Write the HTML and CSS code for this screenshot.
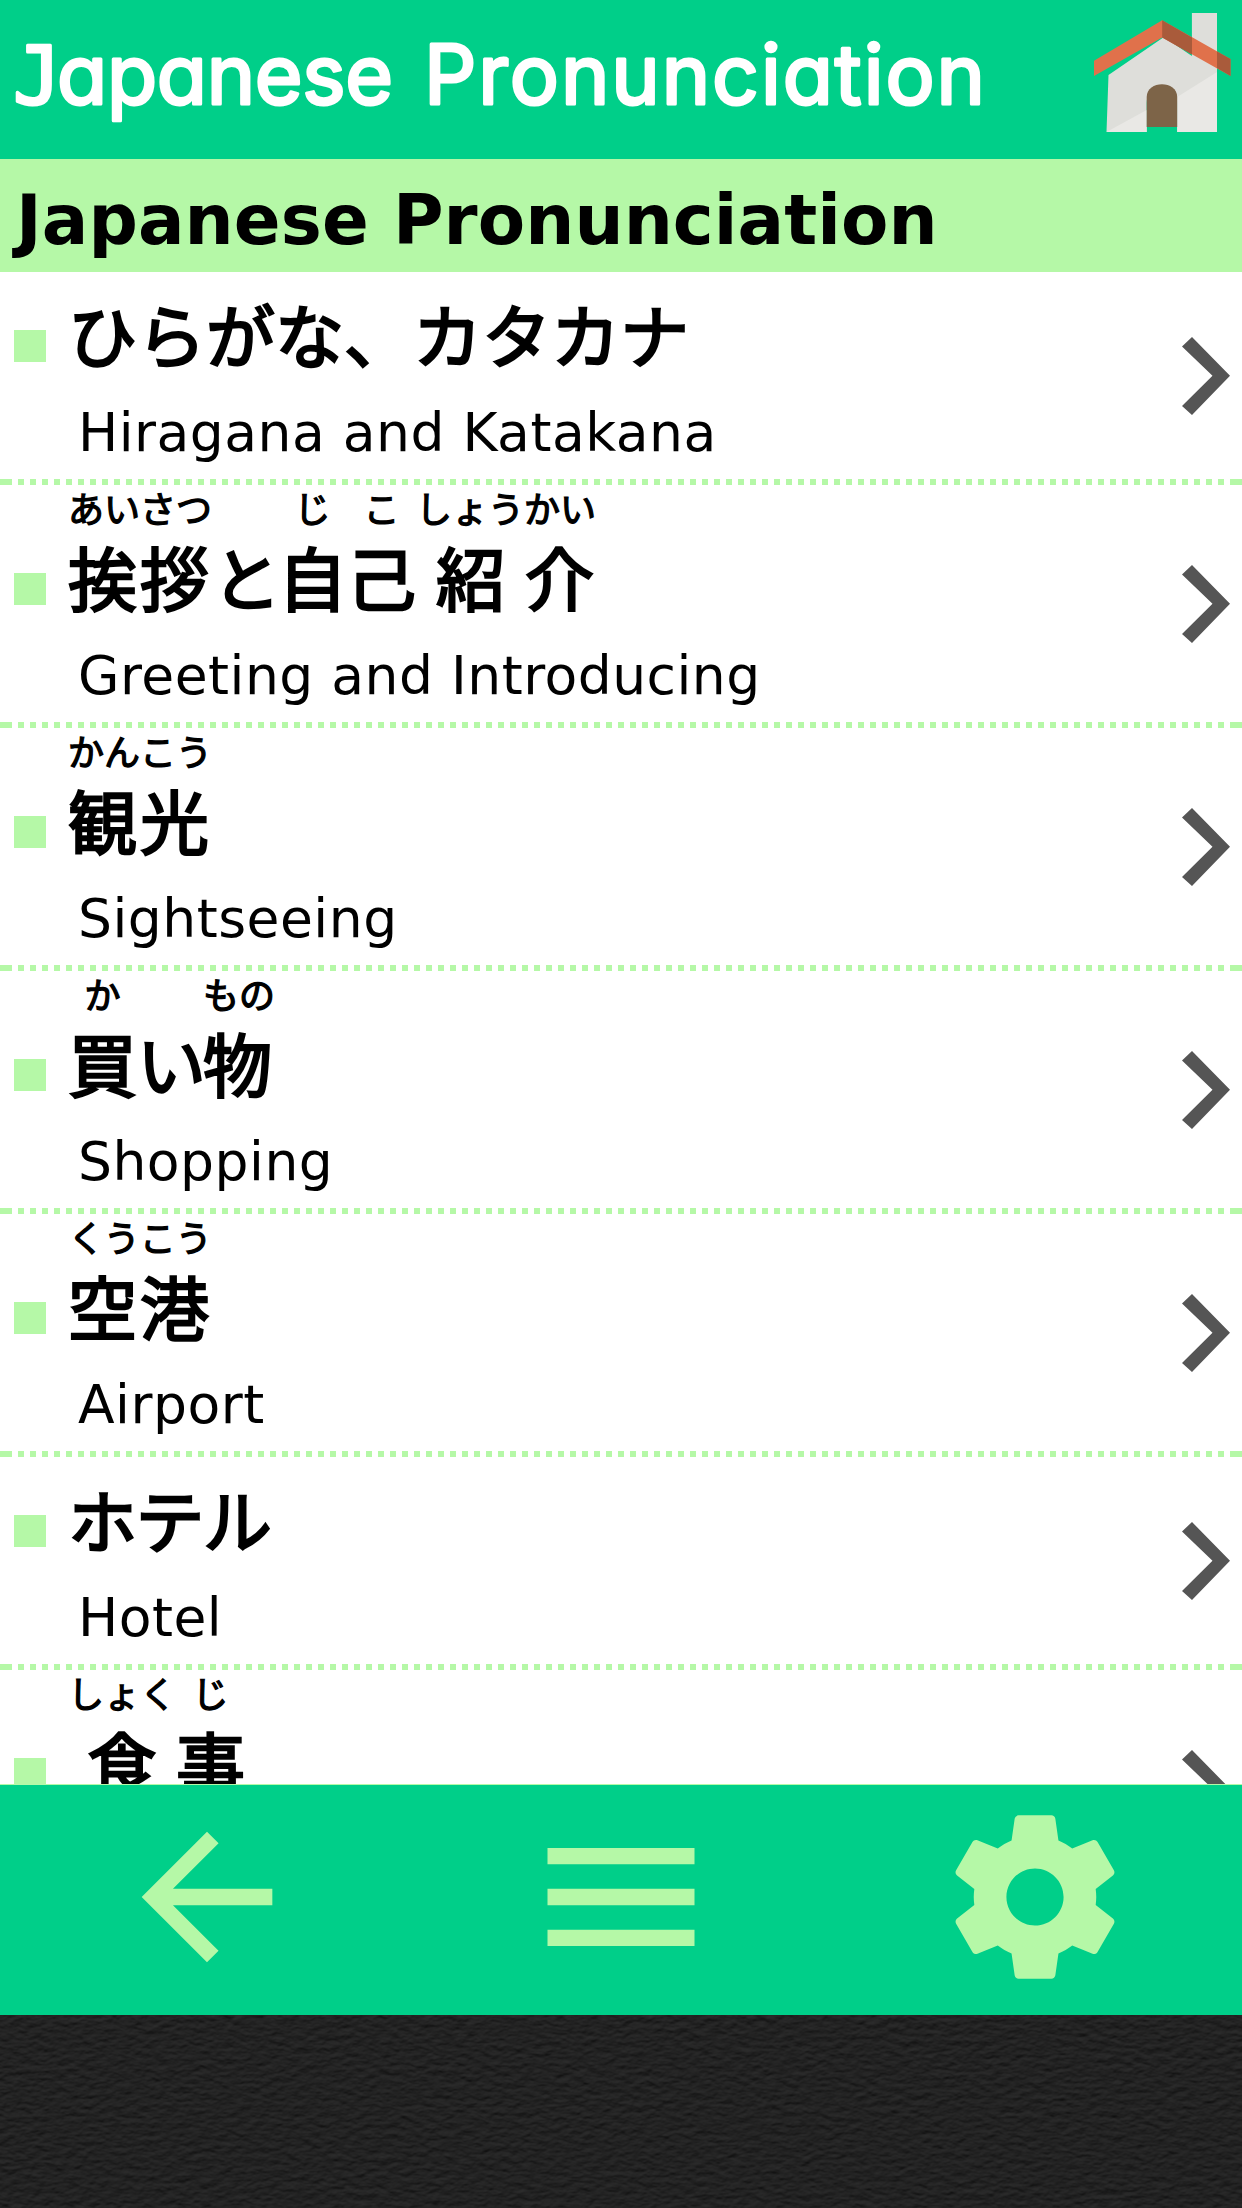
FILE: index.html
```html
<!DOCTYPE html>
<html lang="ja">
<head>
<meta charset="utf-8">
<title>Japanese Pronunciation</title>
<link rel="stylesheet" href="styles.css">
</head>
<body>
<svg class="defs" aria-hidden="true">
  <symbol id="chevron" viewBox="0 0 48 78"><path d="M10 0L48 38.8 10 78 0 69 30.5 38.8 0 9.500z"/></symbol>
</svg>
<header class="top">
  <svg class="logo" viewBox="0 0 1000 159" role="img" aria-label="Japanese Pronunciation">
    <text class="logo-j" x="13" y="104">J</text>
    <text class="logo-text" x="57" y="104" textLength="336">apanese</text>
    <text class="logo-text" x="424" y="104" textLength="561">Pronunciation</text>
  </svg>
  <svg class="house" viewBox="0 0 138 122">
    <path fill="#dededa" d="M14.500 62L70 24l27.900 19V0H123v119H83.200V90a15.200 17 0 0 0-30.500 0v29H12.500z"/>
    <path fill="#e9e8e5" d="M123 59v60H83.200V84zM52.700 97v22H12.500z"/>
    <path fill="#e0714b" d="M0 47.700L68.200 7.300 136.500 46v17L68.200 24.500 0 63z"/>
    <path fill="#a95b3b" d="M68.200 7.300L98 24.500v17L68.200 24.500zM123 38.500L136.500 46v17L123 55z"/>
    <path fill="#7d6448" d="M52.700 114V84c0-17 30.500-17 30.500 0v30z"/>
  </svg>
</header>
<h1 class="title">Japanese Pronunciation</h1>
<ul class="list">
  <li class="row plain"><i class="bullet"></i><div class="body"><p class="jp"><b class="w">ひらがな、カタカナ</b></p><p class="en">Hiragana and Katakana</p></div><svg class="chev"><use href="#chevron"/></svg></li>
  <li class="row"><i class="bullet"></i><div class="body"><p class="jp"><b class="w two"><i class="rt">あいさつ</i>挨拶</b><b class="w tight">と</b><b class="w"><i class="rt">じ</i>自</b><b class="w"><i class="rt">こ</i>己</b><b class="w five"><i class="rt">しょうかい</i>紹介</b></p><p class="en">Greeting and Introducing</p></div><svg class="chev"><use href="#chevron"/></svg></li>
  <li class="row"><i class="bullet"></i><div class="body"><p class="jp"><b class="w two"><i class="rt">かんこう</i>観光</b></p><p class="en">Sightseeing</p></div><svg class="chev"><use href="#chevron"/></svg></li>
  <li class="row"><i class="bullet"></i><div class="body"><p class="jp"><b class="w"><i class="rt">か</i>買</b><b class="w tight">い</b><b class="w start"><i class="rt">もの</i>物</b></p><p class="en">Shopping</p></div><svg class="chev"><use href="#chevron"/></svg></li>
  <li class="row"><i class="bullet"></i><div class="body"><p class="jp"><b class="w two"><i class="rt">くうこう</i>空港</b></p><p class="en">Airport</p></div><svg class="chev"><use href="#chevron"/></svg></li>
  <li class="row plain"><i class="bullet"></i><div class="body"><p class="jp"><b class="w kana">ホテル</b></p><p class="en">Hotel</p></div><svg class="chev"><use href="#chevron"/></svg></li>
  <li class="row"><i class="bullet"></i><div class="body"><p class="jp"><b class="w"><i class="rt">しょく</i>食</b><b class="w"><i class="rt">じ</i>事</b></p></div><svg class="chev"><use href="#chevron"/></svg></li>
</ul>
<nav class="bar">
  <svg class="icon" viewBox="0 0 24 24"><path d="M20 11H7.830l5.590-5.590L12 4l-8 8 8 8 1.410-1.410L7.830 13H20v-2z"/></svg>
  <svg class="icon" viewBox="0 0 24 24"><path d="M3 18h18v-2H3v2zm0-5h18v-2H3v2zm0-7v2h18V6H3z"/></svg>
  <svg class="icon" viewBox="0 0 24 24"><path d="M19.430 12.980c.04-.32.07-.64.07-.98s-.03-.66-.07-.98l2.110-1.650c.19-.15.24-.42.12-.64l-2-3.460c-.12-.22-.39-.3-.61-.22l-2.490 1c-.52-.4-1.080-.73-1.690-.98l-.38-2.650C14.460 2.180 14.250 2 14 2h-4c-.25 0-.46.18-.49.42l-.38 2.650c-.61.25-1.170.59-1.690.98l-2.490-1c-.23-.09-.49 0-.61.22l-2 3.460c-.13.22-.07.49.12.64l2.110 1.650c-.04.32-.07.65-.07.98s.03.66.07.98l-2.110 1.650c-.19.15-.24.42-.12.64l2 3.460c.12.22.39.3.61.22l2.490-1c.52.4 1.080.73 1.690.98l.38 2.650c.03.24.24.42.49.42h4c.25 0 .46-.18.49-.42l.38-2.650c.61-.25 1.170-.59 1.690-.98l2.490 1c.23.09.49 0 .61-.22l2-3.460c.12-.22.07-.49-.12-.64l-2.110-1.650zM12 15.500c-1.930 0-3.500-1.570-3.500-3.500s1.570-3.500 3.500-3.500 3.500 1.570 3.500 3.500-1.570 3.500-3.500 3.500z"/></svg>
</nav>
<footer class="ad">
  <svg width="1242" height="193">
    <filter id="leather" x="0" y="0" width="100%" height="100%" color-interpolation-filters="sRGB">
      <feTurbulence type="fractalNoise" baseFrequency="0.09 0.17" numOctaves="3" seed="4"/>
      <feDiffuseLighting surfaceScale="1.2" diffuseConstant="1" lighting-color="#2e2e2e"><feDistantLight azimuth="260" elevation="48"/></feDiffuseLighting>
    </filter>
    <rect width="1242" height="193" filter="url(#leather)"/>
  </svg>
</footer>
</body>
</html>
```
FILE: styles.css
```css
* { box-sizing: border-box; margin: 0; padding: 0; }
body {
  width: 1242px;
  height: 2208px;
  overflow: hidden;
  display: flex;
  flex-direction: column;
  background: #fff;
  color: #000;
  font-family: Verdana, "DejaVu Sans", sans-serif;
}
svg { display: block; flex: none; }
.defs { width: 0; height: 0; position: absolute; }

.top {
  height: 159px;
  flex: none;
  display: flex;
  justify-content: space-between;
  align-items: flex-start;
  background: #00cf89;
}
.logo { width: 1000px; height: 159px; }
.logo-text, .logo-j {
  fill: #fff;
  stroke: #fff;
  stroke-width: 3;
  stroke-linejoin: round;
}
.logo-text { font: 400 82px Inter, sans-serif; font-feature-settings: "cv11"; }
.logo-j { font: 400 80px "DejaVu Sans Mono", monospace; stroke-width: 3; }
.house { width: 138px; height: 122px; margin: 13px 10px 0 0; }

.title {
  height: 113px;
  flex: none;
  padding-left: 16px;
  background: #b5f8a7;
  font-size: 69px;
  line-height: 123px;
  letter-spacing: 0.1px;
  white-space: nowrap;
}

.list {
  list-style: none;
  height: 1513px;
  flex: none;
  overflow: hidden;
  border-bottom: 1px solid #b5f8a7;
}
.row {
  height: 243px;
  display: flex;
  padding: 0 12px 6px 14px;
  background:
    linear-gradient(#b5f8a7, #b5f8a7) left bottom / 6px 6px no-repeat,
    linear-gradient(#b5f8a7, #b5f8a7) right bottom / 6px 6px no-repeat,
    repeating-linear-gradient(90deg, transparent 0 6px, #b5f8a7 6px 12px) left bottom / 100% 6px no-repeat;
}
.plain { height: 213px; }
.bullet { width: 32px; height: 32px; margin-top: 88px; background: #b5f8a7; flex: none; }
.plain .bullet { margin-top: 58px; }
.body { flex: 1; padding: 10px 0 0 22px; }
.plain .body { padding-top: 16px; }
.jp {
  display: flex;
  align-items: flex-end;
  height: 131px;
  font: 400 69px/100px "Noto Sans CJK JP", sans-serif;
  -webkit-text-stroke: 2.4px #000;
  white-space: nowrap;
}
.plain .jp { height: 95px; }
.w { display: flex; flex-direction: column; align-items: center; font-weight: 400; }
.rt { font-size: 36px; font-style: normal; line-height: 28px; height: 33px; -webkit-text-stroke-width: 1.3px; }
.two { letter-spacing: 3px; }
.tight { margin-right: -3px; }
.start { align-items: flex-start; }
.kana { letter-spacing: -1.5px; }
.five { letter-spacing: 20px; text-indent: 20px; align-items: flex-start; }
.two .rt, .five .rt { letter-spacing: 0; text-indent: 0; }
.en {
  padding-left: 10px;
  font-size: 53.500px;
  line-height: 62px;
  margin-top: 19px;
  letter-spacing: 0.5px;
  white-space: nowrap;
}
.chev { width: 48px; height: 78px; align-self: center; fill: #555; }

.bar {
  height: 230px;
  flex: none;
  display: grid;
  grid-template-columns: repeat(3, 1fr);
  justify-items: center;
  padding-top: 14px;
  background: #00cf89;
}
.icon { width: 196px; height: 196px; fill: #b5f8a7; }
.ad { height: 193px; flex: none; background: #222; }
```
